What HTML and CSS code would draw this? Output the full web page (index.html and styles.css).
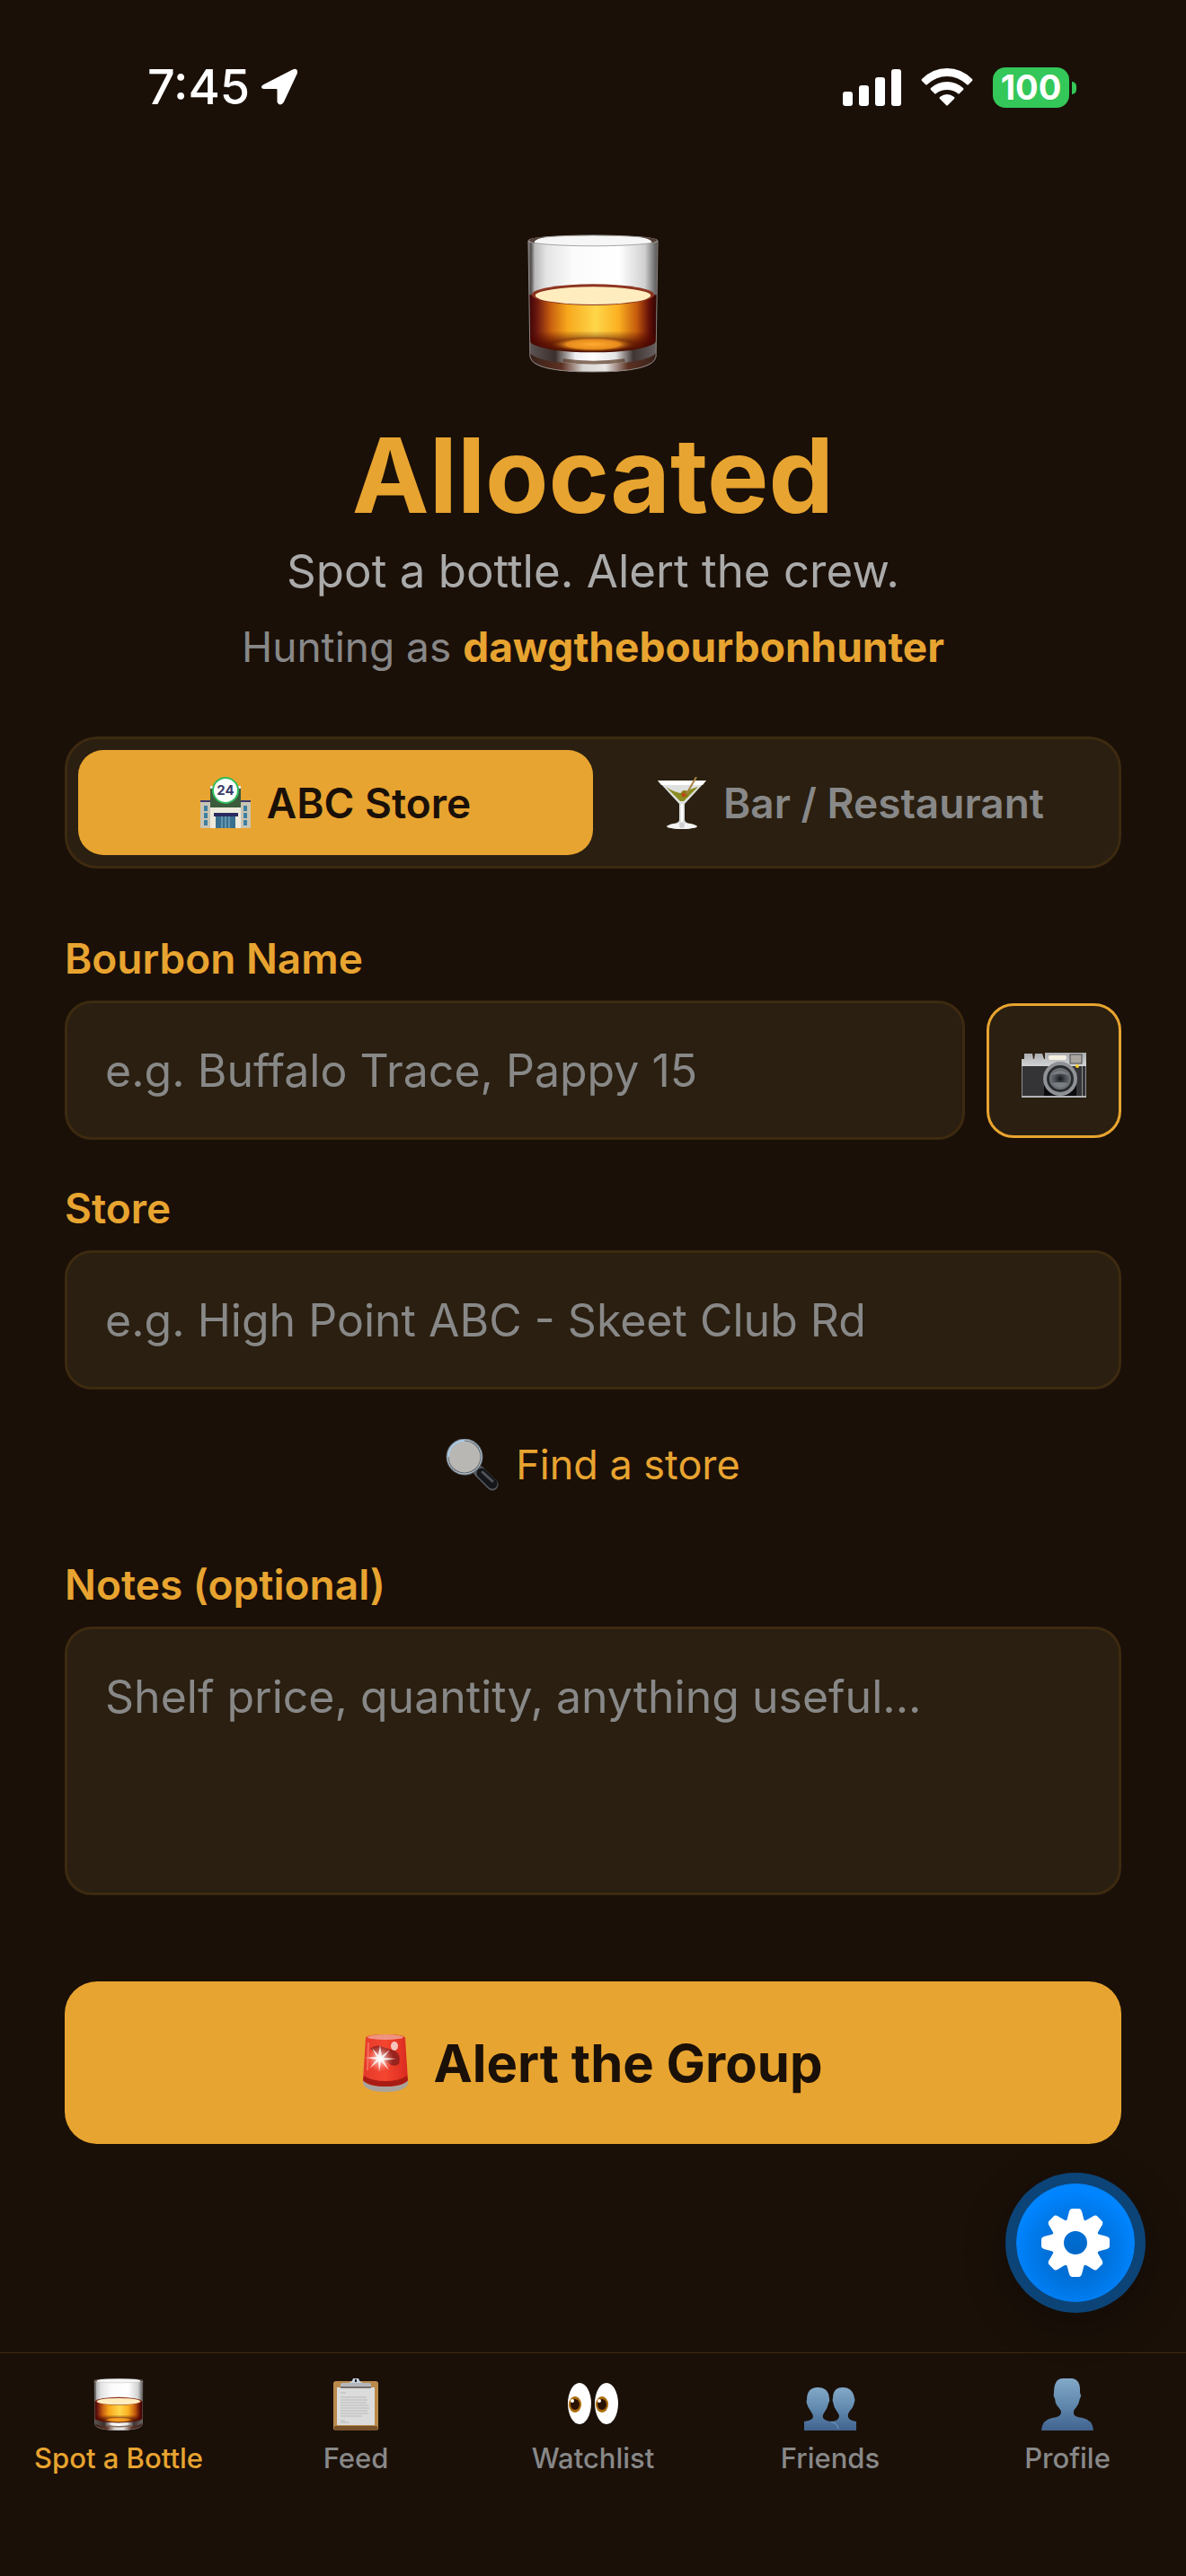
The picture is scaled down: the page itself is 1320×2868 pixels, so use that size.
FILE: index.html
```html
<!DOCTYPE html>
<html lang="en">

<head>
  <meta charset="UTF-8">
  <meta name="viewport" content="width=device-width, initial-scale=1.0">
  <title>Allocated</title>
  <link rel="stylesheet" href="styles.css">
</head>

<body>
  <!-- shared drawings -->
  <svg class="defs" width="0" height="0" aria-hidden="true">
    <defs>
      <linearGradient id="wall" x1="0" x2="1" y1="0" y2="0">
        <stop offset="0" stop-color="#8b8885" />
        <stop offset=".02" stop-color="#4e4b49" />
        <stop offset=".05" stop-color="#b9b9b9" />
        <stop offset=".14" stop-color="#e4e4e4" />
        <stop offset=".35" stop-color="#fbfbfb" />
        <stop offset=".7" stop-color="#ffffff" />
        <stop offset=".9" stop-color="#d0d0d0" />
        <stop offset=".96" stop-color="#858585" />
        <stop offset="1" stop-color="#55504d" />
      </linearGradient>
      <linearGradient id="whiskey" x1="0" x2="1" y1="0" y2="0">
        <stop offset="0" stop-color="#3d0505" />
        <stop offset=".06" stop-color="#6b1710" />
        <stop offset=".17" stop-color="#c96010" />
        <stop offset=".3" stop-color="#f7a81c" />
        <stop offset=".52" stop-color="#ffd64a" />
        <stop offset=".7" stop-color="#fbb022" />
        <stop offset=".84" stop-color="#c65c0c" />
        <stop offset=".94" stop-color="#641008" />
        <stop offset="1" stop-color="#2c0202" />
      </linearGradient>
      <linearGradient id="depth" x1="0" x2="0" y1="0" y2="1">
        <stop offset=".6" stop-color="#4a0600" stop-opacity="0" />
        <stop offset=".8" stop-color="#4a0600" stop-opacity=".75" />
        <stop offset="1" stop-color="#3a0400" />
      </linearGradient>
      <radialGradient id="glow">
        <stop offset="0" stop-color="#ffab30" />
        <stop offset=".6" stop-color="#e68a1c" />
        <stop offset="1" stop-color="#5a1200" stop-opacity="0" />
      </radialGradient>
      <linearGradient id="base" x1="0" x2="1" y1="0" y2="0">
        <stop offset="0" stop-color="#5b5352" />
        <stop offset=".2" stop-color="#3b2f2d" />
        <stop offset=".36" stop-color="#f0f0f0" />
        <stop offset=".5" stop-color="#ffffff" />
        <stop offset=".68" stop-color="#e4e4e4" />
        <stop offset=".82" stop-color="#3f3432" />
        <stop offset="1" stop-color="#665f5e" />
      </linearGradient>
      <linearGradient id="foot" x1="0" x2="1" y1="0" y2="0">
        <stop offset="0" stop-color="#3a221a" />
        <stop offset=".25" stop-color="#5b3021" />
        <stop offset=".42" stop-color="#d8d4d2" />
        <stop offset=".6" stop-color="#e8e6e5" />
        <stop offset=".78" stop-color="#5b3021" />
        <stop offset="1" stop-color="#3a221a" />
      </linearGradient>
      <linearGradient id="person" x1="0" x2="0" y1="0" y2="1">
        <stop offset="0" stop-color="#83a9c8" />
        <stop offset=".5" stop-color="#6189ae" />
        <stop offset="1" stop-color="#41638f" />
      </linearGradient>
      <symbol id="glass" viewBox="0 0 148 156">
        <path d="M1 7L3 138Q6 155 74 155T145 138L147 7Z" fill="url(#wall)" />
        <path d="M2 68H146L145 120Q140 136 74 136T3 120Z" fill="url(#whiskey)" />
        <path d="M2 68H146L145 120Q140 136 74 136T3 120Z" fill="url(#depth)" />
        <ellipse cx="74" cy="124" rx="50" ry="9" fill="url(#glow)" />
        <path d="M3 122Q20 133 74 133T145 122V137Q140 155 74 155T3 137Z" fill="url(#base)" />
        <path d="M3 134Q14 146 74 146T145 134V138Q140 155 74 155T3 138Z" fill="url(#foot)" />
        <path d="M40 142Q74 147 110 142" fill="none" stroke="#56351f" stroke-width="4" opacity=".7" />
        <ellipse cx="74" cy="68" rx="69" ry="12" fill="#8c3420" />
        <ellipse cx="74" cy="69" rx="65" ry="10" fill="#ffedc0" />
        <ellipse cx="74" cy="7" rx="73" ry="6" fill="#f6f6f6" stroke="#a7a3a0" stroke-width="1" />
        <path d="M1 7Q4 3 20 3Q6 6 8 10Z M147 7Q144 3 128 3Q142 6 140 10Z" fill="#54413a" />
        <path d="M1 7L3 138Q6 155 74 155T145 138L147 7" fill="none" stroke="#8d8582" stroke-width="1" />
      </symbol>
    </defs>
  </svg>

  <div class="statusbar">
    <div class="clock">
      <span>7:45</span>
      <svg width="42" height="42" viewBox="0 0 42 42" aria-hidden="true">
        <path d="M4 20L37 3Q39.500 2 39 5L24 37Q22 40 20.500 37V24Q20.500 21 17.500 21H4Q2 21 4 20Z" fill="#fff" stroke="#fff" stroke-width="4" stroke-linejoin="round" />
      </svg>
    </div>
    <div class="signals">
      <svg width="65" height="42" viewBox="0 0 65 42" fill="#fff" aria-hidden="true">
        <rect x="0" y="26" width="11" height="16" rx="3" />
        <rect x="18" y="19" width="11" height="23" rx="3" />
        <rect x="36" y="10" width="11" height="32" rx="3" />
        <rect x="54" y="1" width="11" height="41" rx="3" />
      </svg>
      <svg class="wifi" width="58" height="42" viewBox="0 0 58 42" fill="#fff" aria-hidden="true">
        <path d="M1 12Q13 0 29 0T57 12Q58 13 57 14L53 18Q52 19 51 18Q41 9 29 9T7 18Q6 19 5 18L1 14Q0 13 1 12Z" />
        <path d="M11 22Q19 15 29 15T47 22Q48 23 47 24L43 28Q42 29 41 28Q36 24 29 24T17 28Q16 29 15 28L11 24Q10 23 11 22Z" />
        <path d="M21 32Q25 29 29 29T37 32Q38 33 37 34L30 41Q29 42 28 41L21 34Q20 33 21 32Z" />
      </svg>
      <div class="battery"><span>100</span></div>
    </div>
  </div>

  <main>
    <header class="hero">
      <svg class="logo" viewBox="0 0 148 156" aria-hidden="true"><use href="#glass" /></svg>
      <h1>Allocated</h1>
      <p class="tagline">Spot a bottle. Alert the crew.</p>
      <p class="hunter">Hunting as <strong>dawgthebourbonhunter</strong></p>
    </header>

    <form action="#">
      <div class="toggle">
        <button type="button" class="active" aria-pressed="true">
          <svg width="56" height="58" viewBox="0 0 56 58" aria-hidden="true">
            <rect x="0" y="28" width="12" height="29" fill="#c9c4b4" />
            <rect x="44" y="28" width="12" height="29" fill="#c9c4b4" />
            <rect x="0" y="26" width="12" height="2" fill="#3a3a70" />
            <rect x="44" y="26" width="12" height="2" fill="#3a3a70" />
            <path d="M4 32h4v6H4zM4 40h4v6H4zM4 48h4v6H4zM48 32h4v6h-4zM48 40h4v6h-4zM48 48h4v6h-4z" fill="#3d7fa3" />
            <rect x="11" y="11" width="34" height="24" fill="#3c5b3c" />
            <path d="M11 10h6v3h-6zM39 10h6v3h-6z" fill="#e8e6ee" />
            <rect x="11" y="34" width="34" height="23" fill="#eeeadb" />
            <rect x="17" y="43" width="22" height="14" fill="#39708f" />
            <path d="M24 43v14M28 43v14M32 43v14" stroke="#8fb6c8" />
            <rect x="15" y="40" width="27" height="4" fill="#2b2a60" />
            <circle cx="28" cy="15" r="14" fill="#fff" stroke="#2fbb5c" stroke-width="2" />
            <text x="28" y="20" class="sign">24</text>
          </svg>
          <span>ABC Store</span>
        </button>
        <button type="button" aria-pressed="false">
          <svg width="56" height="58" viewBox="0 0 56 58" aria-hidden="true">
            <path d="M1 4H55L31 30V48Q31 51 38 52Q43 53 43 55Q41 58 28 58T13 55Q13 53 18 52Q25 51 25 48V30Z" fill="#dfe0e0" />
            <path d="M1 4H55L51 9H5Z" fill="#fff" />
            <path d="M10 11L26 27H30L46 11Q37 13 31 18Q22 19 10 11Z" fill="#8a8d21" />
            <circle cx="31" cy="19" r="4" fill="#8a7a15" />
            <circle cx="30" cy="20" r="2" fill="#cc3e1c" />
            <path d="M33 19L44 0" stroke="#a68045" stroke-width="2" />
            <path d="M28 30V50" stroke="#fff" stroke-width="2" />
            <ellipse cx="28" cy="55" rx="17" ry="3" fill="#f5f5f5" />
            <circle cx="28" cy="54" r="3" fill="#cfcfcf" />
          </svg>
          <span>Bar / Restaurant</span>
        </button>
      </div>

      <div class="field">
        <label for="bourbon">Bourbon Name</label>
        <div class="row">
          <input type="text" id="bourbon" placeholder="e.g. Buffalo Trace, Pappy 15">
          <button type="button" class="camera" aria-label="Scan a bottle">
            <svg width="72" height="51" viewBox="0 0 72 51" aria-hidden="true">
              <defs>
                <linearGradient id="chrome" x1="0" x2="0" y1="0" y2="1">
                  <stop offset="0" stop-color="#a9abae" />
                  <stop offset="1" stop-color="#d5d6d8" />
                </linearGradient>
                <radialGradient id="lens">
                  <stop offset="0" stop-color="#15171a" />
                  <stop offset=".5" stop-color="#4b4f54" />
                  <stop offset="1" stop-color="#73777c" />
                </radialGradient>
              </defs>
              <path d="M3 1H12L13 7H14L15 1H23L25 7H26V0H72V16H0V7H3Z" fill="url(#chrome)" />
              <rect x="0" y="15" width="72" height="34" fill="#343436" />
              <path d="M0 15H1V49H0ZM67 15H68V49H67ZM71 15H72V49H71Z" fill="#8d8f92" />
              <path d="M25 30H61V48H25Z" fill="#0b0b0c" />
              <rect x="0" y="48" width="72" height="2" fill="#b3b4b6" />
              <rect x="30" y="3" width="20" height="5" rx="2" fill="#f4f1e3" />
              <rect x="54" y="2" width="13" height="10" fill="#aaa5a0" stroke="#4a4a4c" />
              <circle cx="43" cy="29" r="17" fill="#2a2b2d" stroke="#8e9195" stroke-width="4" />
              <circle cx="43" cy="29" r="12" fill="url(#lens)" />
              <path d="M33 25Q43 15 53 25Q43 22 33 25Z M34 34Q43 32 52 34Q43 44 34 34Z" fill="#7a7f84" />
              <circle cx="62" cy="15" r="2" fill="#ffd22c" />
            </svg>
          </button>
        </div>
      </div>

      <div class="field">
        <label for="store">Store</label>
        <input type="text" id="store" placeholder="e.g. High Point ABC - Skeet Club Rd">
      </div>

      <button type="button" class="find">
        <svg width="60" height="58" viewBox="0 0 60 58" aria-hidden="true">
          <path d="M37 36L52 51" stroke="#55585c" stroke-width="13" stroke-linecap="round" />
          <path d="M40 38L52 50" stroke="#15161a" stroke-width="11" stroke-linecap="round" />
          <path d="M41 37L52 47" stroke="#50545b" stroke-width="3" stroke-linecap="round" />
          <circle cx="21" cy="20" r="19" fill="#b9b7b4" stroke="#62666b" stroke-width="3" />
          <circle cx="21" cy="20" r="19" fill="none" stroke="#bfd6e8" stroke-width="1" />
          <path d="M3 20A18 18 0 0 1 21 2" fill="none" stroke="#a9c8e2" stroke-width="2" />
        </svg>
        <span>Find a store</span>
      </button>

      <div class="field">
        <label for="notes">Notes (optional)</label>
        <textarea id="notes" placeholder="Shelf price, quantity, anything useful..."></textarea>
      </div>

      <button type="submit" class="alert">
        <svg width="50" height="64" viewBox="0 0 50 64" aria-hidden="true">
          <defs>
            <linearGradient id="red" x1="0" x2="1" y1="0" y2="0">
              <stop offset="0" stop-color="#e5392c" />
              <stop offset=".5" stop-color="#f4452f" />
              <stop offset="1" stop-color="#d92a20" />
            </linearGradient>
            <radialGradient id="flash">
              <stop offset="0" stop-color="#fff" />
              <stop offset="1" stop-color="#ff8b78" stop-opacity="0" />
            </radialGradient>
          </defs>
          <path d="M0 48H50V55Q46 64 25 64T0 55Z" fill="#a9a39c" />
          <path d="M3 4Q4 0 25 0T47 4L50 51Q44 58 25 58T0 51Z" fill="url(#red)" />
          <path d="M1 46Q10 52 25 52T49 46L50 51Q44 58 25 58T0 51Z" fill="#a91c14" />
          <ellipse cx="25" cy="3" rx="20" ry="3" fill="#ee9480" />
          <path d="M8 16Q15 10 22 14L35 18Q43 22 40 33Q34 37 28 32Z" fill="#98221c" />
          <ellipse cx="35" cy="13" rx="4" ry="5" fill="#f6c4bd" />
          <circle cx="19" cy="27" r="15" fill="url(#flash)" />
          <path d="M19 12L21 24L30 17L23 26L37 27L23 29L29 40L20 30L18 42L17 30L7 38L15 28L2 26L15 25L10 15L17 23Z" fill="#fff" opacity=".8" />
          <path d="M6 9L5 40" stroke="#ff8c7b" stroke-width="2" opacity=".6" />
        </svg>
        <span>Alert the Group</span>
      </button>
    </form>
  </main>

  <button type="button" class="settings" aria-label="Settings">
    <svg width="78" height="78" viewBox="-39 -39 78 78" fill="#fff" aria-hidden="true">
      <defs>
        <path id="tooth" d="M-10 -24Q-9 -27 -7 -35Q-6 -38 -4 -38H4Q6 -38 7 -35Q9 -27 10 -24Z" />
      </defs>
      <circle r="20" fill="none" stroke="#fff" stroke-width="14" />
      <use href="#tooth" />
      <use href="#tooth" transform="rotate(45)" />
      <use href="#tooth" transform="rotate(90)" />
      <use href="#tooth" transform="rotate(135)" />
      <use href="#tooth" transform="rotate(180)" />
      <use href="#tooth" transform="rotate(225)" />
      <use href="#tooth" transform="rotate(270)" />
      <use href="#tooth" transform="rotate(315)" />
    </svg>
  </button>

  <nav class="tabs">
    <a href="#spot" class="active">
      <svg viewBox="0 0 148 156" aria-hidden="true"><use href="#glass" /></svg>
      <span>Spot a Bottle</span>
    </a>
    <a href="#feed">
      <svg viewBox="0 0 58 58" aria-hidden="true">
        <rect x="4" y="3" width="50" height="55" rx="3" fill="#b98a4a" />
        <rect x="5" y="53" width="48" height="5" rx="1" fill="#77512a" />
        <rect x="8" y="10" width="42" height="42" fill="#dcdcdc" />
        <path d="M12 16H18M12 21H41M12 24H42M12 27H41M12 30H43M12 33H44M12 36H42M12 39H43M12 42H36M12 47H17M12 49H22" stroke="#cacaca" stroke-width="2" />
        <rect x="12" y="5" width="34" height="6" rx="2" fill="#b5b8bb" />
        <rect x="12" y="9" width="34" height="2" fill="#77716b" />
        <path d="M21 5Q25 4 26 0H32Q33 4 37 5Z" fill="#c6d3df" />
        <rect x="28" y="1" width="2" height="3" fill="#1c1c22" />
      </svg>
      <span>Feed</span>
    </a>
    <a href="#watchlist">
      <svg viewBox="0 0 58 58" aria-hidden="true">
        <ellipse cx="14" cy="28" rx="13" ry="23" fill="#fff" />
        <ellipse cx="44" cy="28" rx="13" ry="23" fill="#fff" />
        <ellipse cx="9" cy="29" rx="7" ry="9" fill="#a86a08" />
        <ellipse cx="39" cy="29" rx="7" ry="9" fill="#a86a08" />
        <ellipse cx="9" cy="29" rx="5" ry="6" fill="#2a1204" />
        <ellipse cx="39" cy="29" rx="5" ry="6" fill="#2a1204" />
        <circle cx="6" cy="25" r="2" fill="#fff" />
        <circle cx="36" cy="25" r="2" fill="#fff" />
      </svg>
      <span>Watchlist</span>
    </a>
    <a href="#friends">
      <svg viewBox="0 0 58 58" fill="url(#person)" aria-hidden="true">
        <path d="M31 58V48Q39 47 39 42Q39 40 36 36Q33 32 32 26Q31 24 32 22Q32 10 43 10T56 22Q57 24 56 26Q55 32 51 36Q48 40 49 43Q50 47 58 48V58Z" />
        <path d="M0 58V48Q9 47 10 43Q10 40 7 36Q4 32 3 28Q2 26 3 24Q3 10 15 10T28 22Q29 25 27 28Q26 33 23 37Q20 41 21 44Q23 47 30 48Q38 49 38 58Z" />
        <path d="M30 48Q37 50 38 56" fill="none" stroke="#7ba3c6" stroke-width="1" />
      </svg>
      <span>Friends</span>
    </a>
    <a href="#profile">
      <svg viewBox="0 0 58 58" fill="url(#person)" aria-hidden="true">
        <path d="M0 58Q1 46 12 44Q22 43 22 38Q22 35 18 31Q15 27 15 22Q13 20 14 16Q14 0 24 0H34Q44 1 43 16Q45 20 43 22Q42 28 39 32Q35 36 36 39Q36 43 46 44Q57 46 58 58Z" />
      </svg>
      <span>Profile</span>
    </a>
  </nav>
</body>

</html>
```
FILE: styles.css
```css
* {
  padding: 0;
  margin: 0;
  box-sizing: border-box;
}

a {
  text-decoration: none;
}

body {
  display: flex;
  flex-direction: column;
  position: relative;
  min-height: 100vh;
  background-color: #1a1008;
  color: #e8a430;
  font-family: Inter, "Liberation Sans", sans-serif;
}

button,
input,
textarea {
  border: none;
  background: none;
  font-family: inherit;
}

button {
  display: flex;
  align-items: center;
  justify-content: center;
  cursor: pointer;
}

svg {
  display: block;
  flex-shrink: 0;
}

.defs {
  position: absolute;
}

/* status bar */
.statusbar {
  display: flex;
  align-items: center;
  justify-content: space-between;
  padding: 64px 122px 0 164px;
  line-height: 66px;
  color: #fff;
}

.clock,
.signals {
  display: flex;
  align-items: center;
}

.clock {
  gap: 12px;
  font-size: 54px;
  font-weight: 500;
}

.signals {
  gap: 22px;
}

.battery {
  position: relative;
  width: 85px;
  height: 45px;
  margin-right: 8px;
  border-radius: 14px;
  background-color: #34c759;
  font-size: 38px;
  font-weight: 700;
  line-height: 45px;
  text-align: center;
}

.battery::after {
  content: "";
  position: absolute;
  top: 16px;
  right: -8px;
  width: 5px;
  height: 14px;
  border-radius: 0 6px 6px 0;
  background-color: #34c759;
}

/* content */
main {
  flex: 1;
  padding: 131px 72px 96px;
}

.hero {
  margin-bottom: 70px;
  text-align: center;
}

.logo {
  width: 148px;
  height: 154px;
  margin: 0 auto 45px;
}

.hero h1 {
  font-size: 115px;
  font-weight: 700;
  line-height: 140px;
}

.tagline {
  color: #aaa;
  font-size: 51px;
  line-height: 72px;
}

.hunter {
  margin-top: 18px;
  color: #888;
  font-size: 46px;
  line-height: 60px;
}

.hunter strong {
  color: #e8a430;
}

.toggle {
  display: flex;
  margin-bottom: 72px;
  padding: 12px;
  border: 3px solid #3d2a10;
  border-radius: 36px;
  background-color: #2a1f10;
}

.toggle button {
  flex: 1;
  gap: 18px;
  height: 117px;
  border-radius: 28px;
  color: #888;
  font-size: 46px;
  font-weight: 600;
}

.toggle .active {
  background-color: #e8a430;
  color: #1a1008;
}

.sign {
  fill: #3a3a68;
  font-size: 15px;
  font-weight: 700;
  text-anchor: middle;
}

.field {
  margin-bottom: 48px;
}

.field label {
  display: block;
  margin-bottom: 19px;
  font-size: 46px;
  font-weight: 600;
  line-height: 56px;
}

.row {
  display: flex;
  align-items: center;
  gap: 24px;
}

.field input,
.field textarea {
  display: block;
  width: 100%;
  height: 155px;
  padding: 0 42px;
  border: 3px solid #3d2a10;
  border-radius: 30px;
  background-color: #2a1f10;
  color: #fff;
  font-size: 50px;
  line-height: 70px;
}

.row input {
  flex: 1;
  min-width: 0;
}

.field textarea {
  height: 299px;
  padding: 40px 42px;
  resize: none;
}

::placeholder {
  color: #888;
  opacity: 1;
}

.camera {
  width: 150px;
  height: 150px;
  padding-top: 12px;
  border: 3px solid #e8a430;
  border-radius: 30px;
  background-color: #2a1f10;
}

.find {
  gap: 18px;
  margin: 54px auto 75px;
  color: #e8a430;
  font-size: 45px;
  line-height: 60px;
}

.alert {
  gap: 28px;
  width: 100%;
  height: 181px;
  margin-top: 96px;
  border-radius: 36px;
  background-color: #e8a430;
  color: #1a1008;
  font-size: 58px;
  font-weight: 700;
}

/* floating button */
.settings {
  position: fixed;
  right: 57px;
  bottom: 305px;
  width: 132px;
  height: 132px;
  border-radius: 50%;
  background: radial-gradient(circle at 50% 58%, #0068c8 0, #0070d8 30%, #0084ff 68%);
  box-shadow: 0 0 0 12px #0c4478, 0 12px 48px 12px rgba(0, 0, 0, .3);
}

/* tab bar */
.tabs {
  display: grid;
  grid-template-columns: repeat(5, 1fr);
  padding: 28px 0 111px;
  border-top: 1px solid #3d2a10;
}

.tabs a {
  display: flex;
  flex-direction: column;
  align-items: center;
  gap: 11px;
  color: #888;
  font-size: 31px;
  font-weight: 500;
  line-height: 40px;
}

.tabs svg {
  width: 58px;
  height: 58px;
}

.tabs .active {
  color: #e8a430;
}
```
